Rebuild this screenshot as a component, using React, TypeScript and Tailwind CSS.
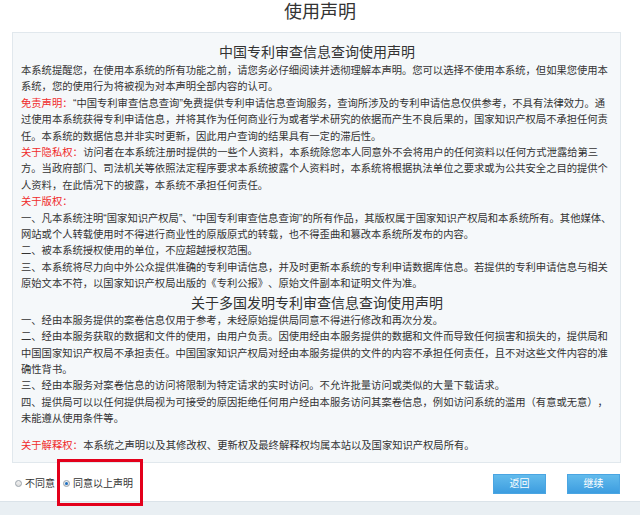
import React from 'react';

/** Red lead-in label used at the start of a paragraph (免责声明：, 关于隐私权： ...). */
function Label({ children }: { children: React.ReactNode }) {
  return <span className="mr-[0.5px] inline-block text-[#f02b2b]">{children}</span>;
}

function Radio({ checked }: { checked?: boolean }) {
  return (
    <span className="inline-flex h-[7px] w-[7px] items-center justify-center rounded-full border border-[#9aa3ab] bg-gradient-to-b from-[#f2f2f2] to-[#dcdcdc]">
      {checked && <span className="h-[3px] w-[3px] rounded-full bg-[#1d6fc2]" />}
    </span>
  );
}

function BlueButton({ children }: { children: React.ReactNode }) {
  return (
    <button className="flex h-[20px] w-[53px] items-center justify-center border border-[#4aa5e2] bg-gradient-to-b from-[#62bbec] to-[#3c9de0] text-[10px] text-white">
      {children}
    </button>
  );
}

export default function App() {
  return (
    <div
      lang="zh-CN"
      className="relative h-[515px] w-[640px] overflow-hidden bg-white font-[family-name:'Liberation_Sans','Noto_Sans_CJK_SC',sans-serif] text-[#333] [text-spacing-trim:space-all]"
    >
      <div className="flex h-[32px] justify-center text-[18px] leading-[25px] text-[#333]">使用声明</div>

      <div className="ml-[12px] w-[609px] border border-[#e1e8ed] bg-[#f5f8fa] pt-[8px] pr-[7px] pb-[8px] pl-[8px]">
        <h2 className="text-center text-[14px] leading-[22px] text-[#333]">中国专利审查信息查询使用声明</h2>
        <div className="w-[592px] text-[10.3px] leading-[16.4px]">
          <p>本系统提醒您，在使用本系统的所有功能之前，请您务必仔细阅读并透彻理解本声明。您可以选择不使用本系统，但如果您使用本系统，您的使用行为将被视为对本声明全部内容的认可。</p>
          <p>
            <Label>免责声明：</Label>“中国专利审查信息查询”免费提供专利申请信息查询服务，查询所涉及的专利申请信息仅供参考，不具有法律效力。通过使用本系统获得专利申请信息，并将其作为任何商业行为或者学术研究的依据而产生不良后果的，国家知识产权局不承担任何责任。本系统的数据信息并非实时更新，因此用户查询的结果具有一定的滞后性。
          </p>
          <p>
            <Label>关于隐私权：</Label>访问者在本系统注册时提供的一些个人资料，本系统除您本人同意外不会将用户的任何资料以任何方式泄露给第三方。当政府部门、司法机关等依照法定程序要求本系统披露个人资料时，本系统将根据执法单位之要求或为公共安全之目的提供个人资料，在此情况下的披露，本系统不承担任何责任。
          </p>
          <p>
            <Label>关于版权：</Label>
          </p>
          <p>一、凡本系统注明“国家知识产权局”、“中国专利审查信息查询”的所有作品，其版权属于国家知识产权局和本系统所有。其他媒体、网站或个人转载使用时不得进行商业性的原版原式的转载，也不得歪曲和篡改本系统所发布的内容。</p>
          <p>二、被本系统授权使用的单位，不应超越授权范围。</p>
          <p>三、本系统将尽力向中外公众提供准确的专利申请信息，并及时更新本系统的专利申请数据库信息。若提供的专利申请信息与相关原始文本不符，以国家知识产权局出版的《专利公报》、原始文件副本和证明文件为准。</p>
        </div>

        <h2 className="text-center text-[14px] leading-[20px] text-[#333]">关于多国发明专利审查信息查询使用声明</h2>
        <div className="w-[592px] text-[10.3px] leading-[16.4px]">
          <p>一、经由本服务提供的案卷信息仅用于参考，未经原始提供局同意不得进行修改和再次分发。</p>
          <p>二、经由本服务获取的数据和文件的使用，由用户负责。因使用经由本服务提供的数据和文件而导致任何损害和损失的，提供局和中国国家知识产权局不承担责任。中国国家知识产权局对经由本服务提供的文件的内容不承担任何责任，且不对这些文件内容的准确性背书。</p>
          <p>三、经由本服务对案卷信息的访问将限制为特定请求的实时访问。不允许批量访问或类似的大量下载请求。</p>
          <p>四、提供局可以以任何提供局视为可接受的原因拒绝任何用户经由本服务访问其案卷信息，例如访问系统的滥用（有意或无意），未能遵从使用条件等。</p>
          <p className="mt-[10px]">
            <Label>关于解释权：</Label>本系统之声明以及其修改权、更新权及最终解释权均属本站以及国家知识产权局所有。
          </p>
        </div>
      </div>

      <div className="mt-[11px] flex h-[20px] items-center pr-[20px] pl-[15px] text-[10px] text-[#333]">
        <label className="flex items-center gap-[3px]">
          <Radio />
          <span>不同意</span>
        </label>
        <label className="ml-[8px] flex items-center gap-[3px]">
          <Radio checked />
          <span>同意以上声明</span>
        </label>
        <div className="ml-auto flex gap-[21px]">
          <BlueButton>返回</BlueButton>
          <BlueButton>继续</BlueButton>
        </div>
      </div>

      <div className="mt-[7px] h-[20px] border-t border-[#dbe3e9] bg-[#e9eff3]" />

      {/* red highlight frame around the agree option */}
      <div className="absolute top-[459px] left-[57px] h-[47px] w-[86px] border-[3px] border-[#e3001b]" />
    </div>
  );
}
